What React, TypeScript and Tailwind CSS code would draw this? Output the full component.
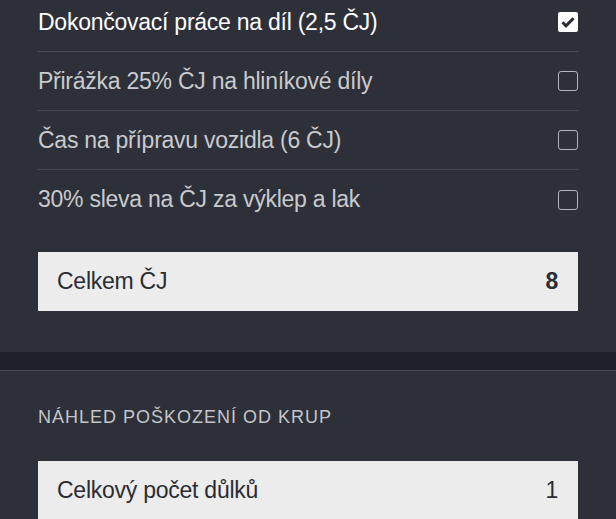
import React, { useState } from "react";

type Option = { id: number; label: string };

const options: Option[] = [
  { id: 1, label: "Dokončovací práce na díl (2,5 ČJ)" },
  { id: 2, label: "Přirážka 25% ČJ na hliníkové díly" },
  { id: 3, label: "Čas na přípravu vozidla (6 ČJ)" },
  { id: 4, label: "30% sleva na ČJ za výklep a lak" },
];

function CheckBox({ checked }: { checked: boolean }) {
  if (checked) {
    return (
      <span className="flex h-[20px] w-[20px] items-center justify-center rounded-[2px] bg-white">
        <svg viewBox="0 0 16 16" className="h-[16px] w-[16px]">
          <path d="M2.5 8.3 L6 11.8 L13.5 4.2" fill="none" stroke="#2a2b33" strokeWidth="3" />
        </svg>
      </span>
    );
  }
  return <span className="h-[20px] w-[20px] rounded-[3px] border-[1.5px] border-[#b4b5ba]" />;
}

export default function App() {
  const [checked, setChecked] = useState<Record<number, boolean>>({ 1: true });

  return (
    <div className="h-[519px] overflow-hidden bg-[#2e3039] font-['Liberation_Sans',Arial,sans-serif]">
      {/* options + total */}
      <div className="px-[38px] pb-[41px]">
        <div className="-mt-[7px] flex flex-col">
          {options.map((o, i) => (
            <div
              key={o.id}
              onClick={() => setChecked((c) => ({ ...c, [o.id]: !c[o.id] }))}
              className={`flex h-[59px] cursor-pointer items-center justify-between ${
                i < options.length - 1 ? "border-b border-[#4a4c55]" : ""
              }`}
            >
              <span
                className={`text-[23px] tracking-[-0.25px] ${
                  checked[o.id] ? "text-white" : "text-[#c9cacd]"
                }`}
              >
                {o.label}
              </span>
              <CheckBox checked={!!checked[o.id]} />
            </div>
          ))}
        </div>
        <div className="mt-[23px] flex h-[59px] items-center justify-between bg-[#ececec] pl-[19px] pr-[20px] text-[23px] tracking-[-0.25px] text-[#2b2c33]">
          <span>Celkem ČJ</span>
          <span className="font-bold">8</span>
        </div>
      </div>

      <div className="h-[18px] bg-[#1f2029]" />

      {/* hail damage preview */}
      <div className="border-t border-[#45474f] px-[38px] pt-[33px]">
        <h2 className="text-[18px] leading-[26px] tracking-[1px] text-[#c4c5c9]">NÁHLED POŠKOZENÍ OD KRUP</h2>
        <div className="mt-[31px] flex h-[59px] items-center justify-between bg-[#ececec] pl-[19px] pr-[20px] text-[23px] tracking-[-0.25px] text-[#2b2c33]">
          <span>Celkový počet důlků</span>
          <span>1</span>
        </div>
      </div>
    </div>
  );
}
